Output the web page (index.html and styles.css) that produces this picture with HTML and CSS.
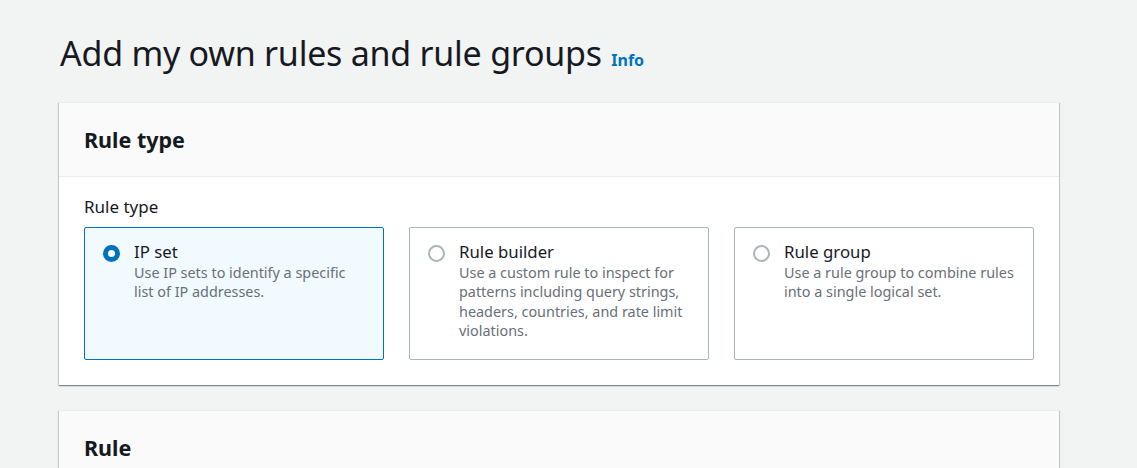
FILE: index.html
```html
<!DOCTYPE html>
<html>
<head>
<meta charset="utf-8">
<link rel="stylesheet" href="styles.css">
</head>
<body>
<div class="page">
  <h1 class="title">Add my own rules and rule groups <a class="info">Info</a></h1>
  <section class="container">
    <div class="c-header"><h2>Rule type</h2></div>
    <div class="c-body">
      <div class="label">Rule type</div>
      <div class="tiles">
        <div class="tile selected">
          <span class="radio on"></span>
          <div class="t-text">
            <div class="t-title">IP set</div>
            <div class="t-desc">Use IP sets to identify a specific list of IP addresses.</div>
          </div>
        </div>
        <div class="tile">
          <span class="radio"></span>
          <div class="t-text">
            <div class="t-title">Rule builder</div>
            <div class="t-desc">Use a custom rule to inspect for patterns including query strings, headers, countries, and rate limit violations.</div>
          </div>
        </div>
        <div class="tile">
          <span class="radio"></span>
          <div class="t-text">
            <div class="t-title">Rule group</div>
            <div class="t-desc">Use a rule group to combine rules into a single logical set.</div>
          </div>
        </div>
      </div>
    </div>
  </section>
  <section class="container">
    <div class="c-header"><h2>Rule</h2></div>
    <div class="c-body tall"></div>
  </section>
</div>
</body>
</html>
```
FILE: styles.css
```css
* { box-sizing: border-box; }
html, body { margin: 0; padding: 0; }
body {
  background: #f2f3f3;
  font-family: "Noto Sans", "Open Sans", sans-serif;
  color: #16191f;
  overflow: hidden;
  height: 468px;
}
.page {
  padding: 29px 78px 0 59px;
}
.title {
  margin: 0 0 18px 1px;
  font-size: 34px;
  font-weight: 400;
  line-height: 48px;
  letter-spacing: -0.25px;
  color: #16191f;
}
.info {
  font-size: 16px;
  font-weight: 700;
  color: #0073bb;
  margin-left: 1px;
  letter-spacing: 0;
}
.container {
  width: 1000px;
  background: #fff;
  box-shadow: 0 1px 1px 0 rgba(0,28,36,.3), 1px 1px 1px 0 rgba(0,28,36,.15), -1px 1px 1px 0 rgba(0,28,36,.15);
  border-top: 1px solid #eaeded;
  margin-bottom: 25px;
}
.c-header {
  background: #fafafa;
  border-bottom: 1px solid #eaeded;
  height: 74px;
  display: flex;
  align-items: center;
  padding: 0 25px;
}
.c-header h2 {
  margin: 0;
  font-size: 21.5px;
  font-weight: 700;
  line-height: 28px;
}
.c-body {
  padding: 19px 25px 25px 25px;
}
.c-body.tall { height: 100px; }
.label {
  font-size: 17px;
  line-height: 22px;
  margin-bottom: 9px;
}
.tiles {
  display: flex;
  gap: 25px;
}
.tile {
  width: 300px;
  height: 133px;
  border: 1px solid #aab7b8;
  border-radius: 2px;
  padding: 13px 17px 0 18px;
  display: flex;
  gap: 14px;
  background: #fff;
}
.tile.selected {
  background: #f1faff;
  border-color: #0073bb;
}
.radio {
  flex: none;
  width: 17px;
  height: 17px;
  border-radius: 50%;
  border: 2px solid #aab7b8;
  margin-top: 4px;
  background: #fff;
}
.radio.on {
  border: 5px solid #0073bb;
  background: #fff;
}
.t-title {
  font-size: 16.8px;
  line-height: 22px;
  color: #16191f;
}
.t-desc {
  font-size: 14.4px;
  line-height: 19.4px;
  color: #687078;
}
```
